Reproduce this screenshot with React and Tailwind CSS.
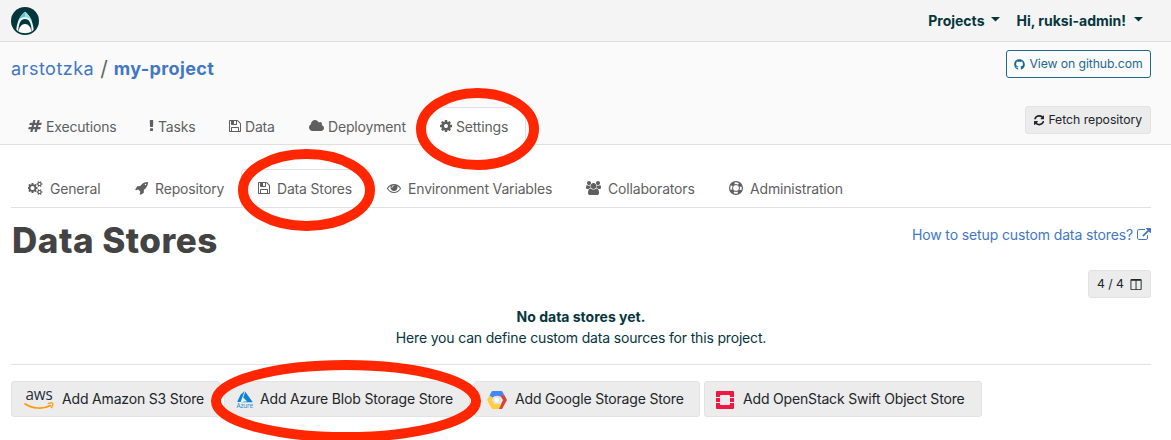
import { FaGithub } from "react-icons/fa";

const glyphs = {
  hashtag: ["0 0 1792 1792", "M991 1024l64-256h-254l-64 256h254zm768-504l-56 224q-7 24-31 24h-327l-64 256h311q15 0 25 12 10 14 6 28l-56 224q-5 24-31 24h-327l-81 328q-7 24-31 24h-224q-16 0-26-12-9-12-6-28l78-312h-254l-81 328q-7 24-31 24h-225q-15 0-25-12-9-12-6-28l78-312h-311q-15 0-25-12-9-12-6-28l56-224q7-24 31-24h327l64-256h-311q-15 0-25-12-10-14-6-28l56-224q5-24 31-24h327l81-328q7-24 32-24h224q15 0 25 12 9 12 6 28l-78 312h254l81-328q7-24 32-24h224q15 0 25 12 9 12 6 28l-78 312h311q15 0 25 12 9 12 6 28z"],
  exclamation: ["576 0 640 1792", "M1088 1248v224q0 26-19 45t-45 19h-256q-26 0-45-19t-19-45v-224q0-26 19-45t45-19h256q26 0 45 19t19 45zm30-1056l-28 768q-1 26-20.5 45t-45.5 19h-256q-26 0-45.5-19t-20.5-45l-28-768q-1-26 17.5-45t44.5-19h320q26 0 44.5 19t17.5 45z"],
  floppy: ["128 0 1536 1792", "M512 1536h768v-384h-768v384zm896 0h128v-896q0-14-10-38.5t-20-34.5l-281-281q-10-10-34-20t-39-10v416q0 40-28 68t-68 28h-576q-40 0-68-28t-28-68v-416h-128v1280h128v-416q0-40 28-68t68-28h832q40 0 68 28t28 68v416zm-384-928v-320q0-13-9.5-22.5t-22.5-9.5h-192q-13 0-22.5 9.5t-9.5 22.5v320q0 13 9.5 22.5t22.5 9.5h192q13 0 22.5-9.5t9.5-22.5zm640 32v928q0 40-28 68t-68 28h-1344q-40 0-68-28t-28-68v-1344q0-40 28-68t68-28h928q40 0 88 20t76 48l280 280q28 28 48 76t20 88z"],
  cloud: ["64 0 1920 1792", "M1984 1152q0 159-112.5 271.5t-271.5 112.5h-1088q-185 0-316.5-131.5t-131.5-316.5q0-132 71-241.5t187-163.5q-2-28-2-43 0-212 150-362t362-150q158 0 286.5 88t187.5 230q70-62 166-62 106 0 181 75t75 181q0 75-41 138 129 30 213 134.5t84 239.5z"],
  cog: ["128 0 1536 1792", "M1152 896q0-106-75-181t-181-75-181 75-75 181 75 181 181 75 181-75 75-181zm512-109v222q0 12-8 23t-20 13l-185 28q-19 54-39 91 35 50 107 138 10 12 10 25t-9 23q-27 37-99 108t-94 71q-12 0-26-9l-138-108q-44 23-91 38-16 136-29 186-7 28-36 28h-222q-14 0-24.5-8.5t-11.5-21.5l-28-184q-49-16-90-37l-141 107q-10 9-25 9-14 0-25-11-126-114-165-168-7-10-7-23 0-12 8-23 15-21 51-66.5t54-70.5q-27-50-41-99l-183-27q-13-2-21-12.5t-8-23.5v-222q0-12 8-23t19-13l186-28q14-46 39-92-40-57-107-138-10-12-10-24 0-10 9-23 26-36 98.5-107.5t94.5-71.5q13 0 26 10l138 107q44-23 91-38 16-136 29-186 7-28 36-28h222q14 0 24.5 8.5t11.5 21.5l28 184q49 16 90 37l142-107q9-9 24-9 13 0 25 10 129 119 165 170 7 8 7 22 0 12-8 23-15 21-51 66.5t-54 70.5q26 50 41 98l183 28q13 2 21 12.5t8 23.5z"],
  refresh: ["128 0 1536 1792", "M1639 1056q0 5-1 7-64 268-268 434.5t-478 166.5q-146 0-282.5-55t-243.5-157l-129 129q-19 19-45 19t-45-19-19-45v-448q0-26 19-45t45-19h448q26 0 45 19t19 45-19 45l-137 137q71 66 161 102t187 36q134 0 250-65t186-179q11-17 53-117 8-23 30-23h192q13 0 22.5 9.5t9.5 22.5zm25-800v448q0 26-19 45t-45 19h-448q-26 0-45-19t-19-45 19-45l138-138q-148-137-349-137-134 0-250 65t-186 179q-11 17-53 117-8 23-30 23h-199q-13 0-22.5-9.5t-9.5-22.5v-7q65-268 270-434.5t480-166.5q146 0 284 55.5t245 156.5l130-129q19-19 45-19t45 19 19 45z"],
  rocket: ["0 0 1664 1792", "M1440 448q0-40-28-68t-68-28-68 28-28 68 28 68 68 28 68-28 28-68zm224-288q0 249-75.5 430.5t-253.5 360.5q-81 80-195 176l-20 379q-2 16-16 26l-384 224q-7 4-16 4-12 0-23-9l-64-64q-13-14-8-32l85-276-281-281-276 85q-3 1-9 1-14 0-23-9l-64-64q-17-19-5-39l224-384q10-14 26-16l379-20q96-114 176-195 188-187 358-258t431-71q14 0 24 9.5t10 22.5z"],
  eye: ["0 0 1792 1792", "M1664 960q-152-236-381-353 61 104 61 225 0 185-131.5 316.5t-316.5 131.5-316.5-131.5-131.5-316.5q0-121 61-225-229 117-381 353 133 205 333.5 326.5t434.5 121.5 434.5-121.5 333.5-326.5zm-720-384q0-20-14-34t-34-14q-125 0-214.5 89.5t-89.5 214.5q0 20 14 34t34 14 34-14 14-34q0-86 61-147t147-61q20 0 34-14t14-34zm848 384q0 34-20 69-140 230-376.5 368.5t-499.5 138.5-499.5-139-376.5-368q-20-35-20-69t20-69q140-229 376.5-368t499.5-139 499.5 139 376.5 368q20 35 20 69z"],
  external: ["0 0 1792 1792", "M1408 928v320q0 119-84.5 203.5t-203.5 84.5h-832q-119 0-203.5-84.5t-84.5-203.5v-832q0-119 84.5-203.5t203.5-84.5h704q14 0 23 9t9 23v64q0 14-9 23t-23 9h-704q-66 0-113 47t-47 113v832q0 66 47 113t113 47h832q66 0 113-47t47-113v-320q0-14 9-23t23-9h64q14 0 23 9t9 23zm384-864v512q0 26-19 45t-45 19-45-19l-176-176-652 652q-10 10-23 10t-23-10l-114-114q-10-10-10-23t10-23l652-652-176-176q-19-19-19-45t19-45 45-19h512q26 0 45 19t19 45z"],
  columns: ["64 0 1664 1792", "M288 1536h544v-1152h-576v1120q0 13 9.5 22.5t22.5 9.5zm1248-32v-1120h-576v1152h544q13 0 22.5-9.5t9.5-22.5zm128-1216v1216q0 66-47 113t-113 47h-1216q-66 0-113-47t-47-113v-1216q0-66 47-113t113-47h1216q66 0 113 47t47 113z"],
  users: ["-64 0 1920 1792", "M529 896q-162 5-265 128h-134q-82 0-138-40.5t-56-118.5q0-353 124-353 6 0 43.5 21t97.5 42.5 119 21.5q67 0 133-23-5 37-5 66 0 139 81 256zm1071 637q0 120-73 189.5t-194 69.5h-874q-121 0-194-69.5t-73-189.5q0-53 3.5-103.5t14-109 26.5-108.5 43-97.5 62-81 85.5-53.5 111.5-20q10 0 43 21.5t73 48 107 48 135 21.5 135-21.5 107-48 73-48 43-21.5q61 0 111.5 20t85.5 53.5 62 81 43 97.5 26.5 108.5 14 109 3.5 103.5zm-1024-1277q0 106-75 181t-181 75-181-75-75-181 75-181 181-75 181 75 75 181zm704 384q0 159-112.5 271.5t-271.5 112.5-271.5-112.5-112.5-271.5 112.5-271.5 271.5-112.5 271.5 112.5 112.5 271.5zm576 225q0 78-56 118.5t-138 40.5h-134q-103-123-265-128 81-117 81-256 0-29-5-66 66 23 133 23 59 0 119-21.5t97.5-42.5 43.5-21q124 0 124 353zm-128-609q0 106-75 181t-181 75-181-75-75-181 75-181 181-75 181 75 75 181z"],
  cogs: ["0 0 1920 1792", "M832 896q0-106-75-181t-181-75-181 75-75 181 75 181 181 75 181-75 75-181zm768 512q0-52-38-90t-90-38-90 38-38 90q0 53 37.5 90.5t90.5 37.5 90.5-37.5 37.5-90.5zm0-1024q0-52-38-90t-90-38-90 38-38 90q0 53 37.5 90.5t90.5 37.5 90.5-37.5 37.5-90.5zm-384 421v185q0 10-7 19.5t-16 10.5l-155 24q-11 35-32 76 34 48 90 115 7 11 7 20 0 12-7 19-23 30-82.5 89.5t-78.5 59.5q-11 0-21-7l-115-90q-37 19-77 31-11 108-23 155-7 24-30 24h-186q-11 0-20-7.5t-10-17.5l-23-153q-34-10-75-31l-118 89q-7 7-20 7-11 0-21-8-144-133-144-160 0-9 7-19 10-14 41-53t47-61q-23-44-35-82l-152-24q-10-1-17-9.5t-7-19.5v-185q0-10 7-19.5t16-10.5l155-24q11-35 32-76-34-48-90-115-7-11-7-20 0-12 7-20 22-30 82-89t79-59q11 0 21 7l115 90q34-18 77-32 11-108 23-154 7-24 30-24h186q11 0 20 7.5t10 17.5l23 153q34 10 75 31l118-89q8-7 20-7 11 0 21 8 144 133 144 160 0 8-7 19-12 16-42 54t-45 60q23 48 34 82l152 23q10 2 17 10.5t7 19.5zm640 533v140q0 16-149 31-12 27-30 52 51 113 51 138 0 4-4 7-122 71-124 71-8 0-46-47t-52-68q-20 2-30 2t-30-2q-14 21-52 68t-46 47q-2 0-124-71-4-3-4-7 0-25 51-138-18-25-30-52-149-15-149-31v-140q0-16 149-31 13-29 30-52-51-113-51-138 0-4 4-7 4-2 35-20t59-34 30-16q8 0 46 46.5t52 67.5q20-2 30-2t30 2q51-71 92-112l6-2q4 0 124 70 4 3 4 7 0 25-51 138 17 23 30 52 149 15 149 31zm0-1024v140q0 16-149 31-12 27-30 52 51 113 51 138 0 4-4 7-122 71-124 71-8 0-46-47t-52-68q-20 2-30 2t-30-2q-14 21-52 68t-46 47q-2 0-124-71-4-3-4-7 0-25 51-138-18-25-30-52-149-15-149-31v-140q0-16 149-31 13-29 30-52-51-113-51-138 0-4 4-7 4-2 35-20t59-34 30-16q8 0 46 46.5t52 67.5q20-2 30-2t30 2q51-71 92-112l6-2q4 0 124 70 4 3 4 7 0 25-51 138 17 23 30 52 149 15 149 31z"],
};

function Icon({ name, className = "h-[14px]" }) {
  if (name === "ring") {
    return (
      <svg viewBox="0 0 14 14" className={`shrink-0 ${className}`} fill="none" stroke="currentColor">
        <circle cx="7" cy="7" r="6.4" strokeWidth="1.2" />
        <circle cx="7" cy="7" r="3.5" strokeWidth="1" />
        <circle cx="7" cy="7" r="5" strokeWidth="2.8" strokeDasharray="3.6 4.254" strokeDashoffset="-2.13" />
      </svg>
    );
  }
  const [box, d] = glyphs[name];
  return (
    <svg viewBox={box} className={`shrink-0 ${className}`} fill="currentColor">
      <path d={d} />
    </svg>
  );
}

function Logo() {
  return (
    <svg viewBox="0 0 28 28" className="size-7">
      <circle cx="14" cy="14" r="14" fill="#04363d" />
      <path d="M14 4.700C10 8 6.300 13 5.300 22.500l2 2.300C7.500 15.500 10 12 14 12s6.500 3.500 6.700 12.800l2-2.300C21.700 13 18 8 14 4.700z" fill="#e9f7f8" />
      <path d="M14 4.700C11.200 7 8.700 10 7 14c1.800-2.600 4-4 7-4s5.200 1.400 7 4c-1.700-4-4.200-7-7-9.300z" fill="#5cc5c9" />
      <path d="M14 4.700V10c3 0 5.200 1.400 7 4-1.700-4-4.200-7-7-9.300z" fill="#a4dde0" />
      <path d="M7.500 24.500C8.100 20.500 10.500 17 14 17s5.900 3.500 6.500 7.500c-1.700 1.200-3.900 1.700-6.500 1.700s-4.800-.5-6.500-1.700z" fill="#fff" />
    </svg>
  );
}

function Caret() {
  return (
    <svg viewBox="0 0 9 5" className="-mt-0.5 h-[5px] w-[9px]" fill="#06363d">
      <path d="M0 0h9L4.500 4.500z" />
    </svg>
  );
}

function AwsLogo() {
  return (
    <svg viewBox="0 0 31 20" className="h-5 w-[31px] overflow-visible">
      <text x="1.500" y="10" textLength="27" lengthAdjust="spacingAndGlyphs" fontSize="15.500" fontWeight="500" fill="#252f3e" className="font-['Open_Sans',sans-serif]">aws</text>
      <path d="M0.500 13.500C8 18.900 19 19.600 27 15.200" fill="none" stroke="#f90" strokeWidth="1.700" />
      <path d="M23.800 13.700c2-1.200 4.700-1 5-.4s-.2 3.300-1.800 4.700" fill="none" stroke="#f90" strokeWidth="1.200" />
    </svg>
  );
}

function AzureLogo() {
  return (
    <svg viewBox="0 0 18 20" className="h-5 w-[18px] overflow-visible">
      <path d="M8.700 1L4.500 4.700 1.200 12h3.400zM9.300 1.700L7.200 7.400l3.900 3.900L4.600 12.300H16.800z" fill="#0d83d2" />
      <text x="0.500" y="18" textLength="16.500" lengthAdjust="spacingAndGlyphs" fontSize="6.500" fill="#1a88d4" className="font-['Open_Sans',sans-serif]">Azure</text>
    </svg>
  );
}

function GoogleLogo() {
  return (
    <svg viewBox="0 0 20 18" className="h-[18px] w-5">
      <path d="M5 0h10l2.500 4.500L13 5.500H7L4.500 7.500 2.600 4.300z" fill="#4486f4" />
      <path d="M17.500 4.300L20 9l-5 9h-4l3-5 2-4-3-4.500z" fill="#da4438" />
      <path d="M2.600 4.300L0 9l5 9h7l2.500-5H7.500L5 9l1-2z" fill="#ffcd41" />
      <circle cx="10" cy="9" r="4.300" fill="#e2e3e5" />
      <circle cx="10" cy="9" r="2.300" fill="#fff" />
    </svg>
  );
}

function OpenStackLogo() {
  return (
    <svg viewBox="0 0 18 18" className="size-[18px]" fill="#ed1944">
      <path d="M1 0h16a1 1 0 0 1 1 1v5h-4V5a1 1 0 0 0-1-1H5a1 1 0 0 0-1 1v1H0V1a1 1 0 0 1 1-1zM0 12h4v1a1 1 0 0 0 1 1h8a1 1 0 0 0 1-1v-1h4v5a1 1 0 0 1-1 1H1a1 1 0 0 1-1-1zM0 7h4v4H0zM14 7h4v4h-4z" />
    </svg>
  );
}

const projectTabs = [
  ["Executions", "hashtag", "w-[121px]"],
  ["Tasks", "exclamation", "w-[80px]"],
  ["Data", "floppy", "w-[80px]"],
  ["Deployment", "cloud", "w-[131px]"],
  ["Settings", "cog", "w-[103px]"],
];

const settingsTabs = [
  ["General", "cogs", "w-[107px]"],
  ["Repository", "rocket", "w-[123px]"],
  ["Data Stores", "floppy", "w-[129px]"],
  ["Environment Variables", "eye", "w-[199px]"],
  ["Collaborators", "users", "w-[143px]"],
  ["Administration", "ring", "w-[148px]"],
];

function Tabs({ items, active, gap }) {
  return (
    <nav className="flex h-[38px] text-[14px] text-[#5f5f5f]">
      {items.map(([label, icon, width]) => (
        <a
          key={label}
          className={`flex items-center border border-b-0 pb-px pl-4 whitespace-nowrap ${gap} ${width} ${
            label === active ? "rounded-t border-[#dee2e6] bg-white" : "border-transparent"
          }`}
        >
          <Icon name={icon} />
          <span>{label}</span>
        </a>
      ))}
    </nav>
  );
}

const stores = [
  ["Add Amazon S3 Store", AwsLogo, "w-[209px] pl-3", "gap-[7px]"],
  ["Add Azure Blob Storage Store", AzureLogo, "w-[246px] pl-[11px]", "gap-[6px]"],
  ["Add Google Storage Store", GoogleLogo, "w-[226px] pl-3", "gap-[8px]"],
  ["Add OpenStack Swift Object Store", OpenStackLogo, "w-[278px] pl-[11px]", "gap-[9px]"],
];

export default function App() {
  return (
    <div className="relative h-[440px] w-[1171px] overflow-hidden bg-white font-[Inter,sans-serif] text-[14px] tracking-[-0.17px] text-[#212529]">
      <header className="flex h-[42px] items-center justify-between border-b border-[#dedede] bg-[#f4f4f4] pr-[28px] pl-[11px]">
        <Logo />
        <div className="flex items-center gap-[16px] font-bold tracking-normal text-[#06363d]">
          <span className="flex items-center gap-[7px]">Projects <Caret /></span>
          <span className="flex items-center gap-[8px]">Hi, ruksi-admin! <Caret /></span>
        </div>
      </header>

      <section className="flex h-[103px] flex-col justify-between border-b border-[#dee0e2] bg-[#fafafa] pr-5 pl-[11px]">
        <div className="flex items-start justify-between pt-2">
          <h2 className="flex gap-[6px] pt-[5px] text-[18px] leading-7 text-[#4277c3]">
            <span className="tracking-[0.5px]">arstotzka</span>
            <span className="text-[21px] text-[#666]">/</span>
            <b className="tracking-[0.4px]">my-project</b>
          </h2>
          <button className="flex h-7 w-[145px] items-center justify-center gap-[4px] rounded-[3px] border border-[#1f6a8c] text-[12.250px] tracking-[-0.1px] whitespace-nowrap text-[#1f6a8c]">
            <FaGithub className="size-[11px]" />
            <span>View on github.com</span>
          </button>
        </div>
        <div className="-mb-px flex items-start justify-between">
          <Tabs items={projectTabs} active="Settings" gap="gap-[4px]" />
          <button className="-mt-px flex h-7 w-[126px] items-center justify-center gap-[4px] rounded-[3px] border border-[#e2e2e2] bg-[#ececec] text-[12.250px] tracking-[-0.03px] whitespace-nowrap">
            <Icon name="refresh" className="h-[12.250px]" />
            <span>Fetch repository</span>
          </button>
        </div>
      </section>

      <main className="pr-5 pl-[11px]">
        <div className="mt-6 h-[39px] border-b border-[#dee2e6]">
          <Tabs items={settingsTabs} active="Data Stores" gap="gap-[7px]" />
        </div>
        <div className="flex h-[62px] items-start justify-between">
          <h1 className="pt-[11px] pl-px text-[35px] leading-[42px] font-extrabold tracking-[0.500px] text-[#434343]">Data Stores</h1>
          <a className="flex items-center gap-[4px] pt-[17px] leading-5 tracking-[-0.13px] text-[#4277c3]">
            <span>How to setup custom data stores?</span>
            <Icon name="external" />
          </a>
        </div>
        <div className="flex justify-end">
          <button className="flex h-7 w-[63px] items-center justify-center gap-[6px] rounded-[3px] border border-[#e2e2e2] bg-[#ececec] text-[12.250px] tracking-normal">
            <span>4 / 4</span>
            <Icon name="columns" className="h-[13px]" />
          </button>
        </div>
        <div className="pt-[8px] text-center leading-[21px] text-[#06363d]">
          <p className="font-bold tracking-normal">No data stores yet.</p>
          <p>Here you can define custom data sources for this project.</p>
        </div>
        <hr className="mt-[16px] border-[#e2e2e2]" />
        <div className="mt-4 flex gap-[4px]">
          {stores.map(([label, Mark, box, gap]) => (
            <button key={label} className={`flex h-9 items-center rounded-[3px] border border-[#e2e2e2] bg-[#ececec] pb-[2px] whitespace-nowrap ${box} ${gap}`}>
              <span className="pt-[3px]"><Mark /></span>
              <span>{label}</span>
            </button>
          ))}
        </div>
      </main>

      <svg viewBox="0 0 1171 440" className="pointer-events-none absolute inset-0 h-[440px] w-[1171px]" fill="none" stroke="#ff2600" strokeWidth="10">
        <ellipse cx="477.500" cy="129" rx="56.500" ry="36" />
        <ellipse cx="306.500" cy="190" rx="63.500" ry="36" />
        <ellipse cx="346" cy="401" rx="130" ry="36" />
      </svg>
    </div>
  );
}
